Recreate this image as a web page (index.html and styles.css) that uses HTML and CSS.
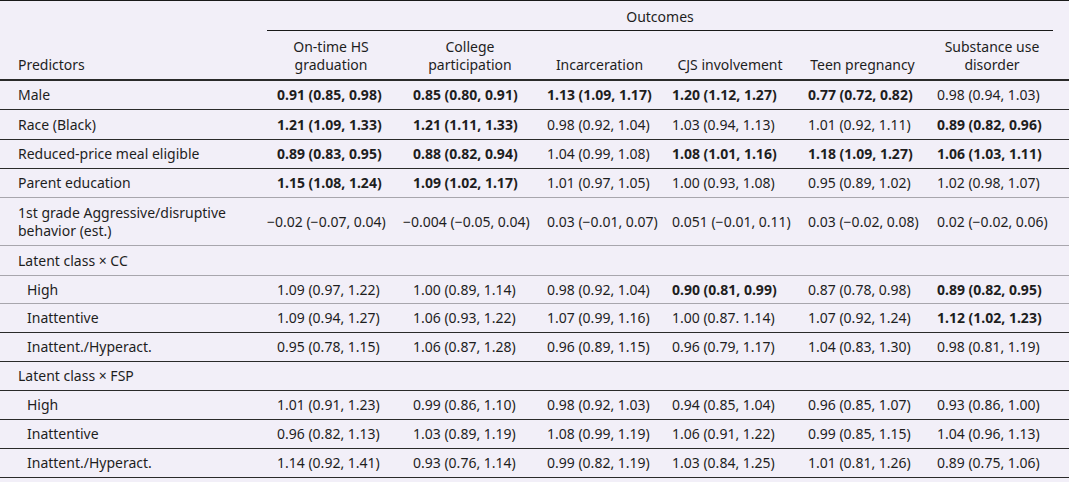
FILE: index.html
```
<!DOCTYPE html>
<html lang="en">
<head>
<meta charset="utf-8">
<title>Outcomes table</title>
<link rel="stylesheet" href="styles.css">
</head>
<body>
<table class="tbl">
  <colgroup>
    <col class="c-pred">
    <col class="c1">
    <col class="c2">
    <col class="c3">
    <col class="c4">
    <col class="c5">
    <col class="c6">
  </colgroup>
  <thead>
    <tr class="h1">
      <th class="blank"></th>
      <th class="span" colspan="6"><div class="span-line">Outcomes</div></th>
    </tr>
    <tr class="h2">
      <th class="pred-h">Predictors</th>
      <th class="first-h">On-time HS<br>graduation</th>
      <th>College<br>participation</th>
      <th>Incarceration</th>
      <th>CJS involvement</th>
      <th>Teen pregnancy</th>
      <th class="last-h">Substance use<br>disorder</th>
    </tr>
  </thead>
  <tbody>
    <tr class="dark">
      <td class="lab">Male</td>
      <td class="b">0.91 (0.85, 0.98)</td>
      <td class="b">0.85 (0.80, 0.91)</td>
      <td class="b">1.13 (1.09, 1.17)</td>
      <td class="b">1.20 (1.12, 1.27)</td>
      <td class="b">0.77 (0.72, 0.82)</td>
      <td>0.98 (0.94, 1.03)</td>
    </tr>
    <tr class="dark r30">
      <td class="lab">Race (Black)</td>
      <td class="b">1.21 (1.09, 1.33)</td>
      <td class="b">1.21 (1.11, 1.33)</td>
      <td>0.98 (0.92, 1.04)</td>
      <td>1.03 (0.94, 1.13)</td>
      <td>1.01 (0.92, 1.11)</td>
      <td class="b">0.89 (0.82, 0.96)</td>
    </tr>
    <tr class="dark">
      <td class="lab">Reduced-price meal eligible</td>
      <td class="b">0.89 (0.83, 0.95)</td>
      <td class="b">0.88 (0.82, 0.94)</td>
      <td>1.04 (0.99, 1.08)</td>
      <td class="b">1.08 (1.01, 1.16)</td>
      <td class="b">1.18 (1.09, 1.27)</td>
      <td class="b">1.06 (1.03, 1.11)</td>
    </tr>
    <tr class="light">
      <td class="lab">Parent education</td>
      <td class="b">1.15 (1.08, 1.24)</td>
      <td class="b">1.09 (1.02, 1.17)</td>
      <td>1.01 (0.97, 1.05)</td>
      <td>1.00 (0.93, 1.08)</td>
      <td>0.95 (0.89, 1.02)</td>
      <td>1.02 (0.98, 1.07)</td>
    </tr>
    <tr class="light tall">
      <td class="lab">1st grade Aggressive/disruptive<br>behavior (est.)</td>
      <td class="neg">−0.02 (−0.07, 0.04)</td>
      <td class="neg">−0.004 (−0.05, 0.04)</td>
      <td>0.03 (−0.01, 0.07)</td>
      <td>0.051 (−0.01, 0.11)</td>
      <td>0.03 (−0.02, 0.08)</td>
      <td>0.02 (−0.02, 0.06)</td>
    </tr>
    <tr class="light r30">
      <td class="lab">Latent class × CC</td>
      <td></td><td></td><td></td><td></td><td></td><td></td>
    </tr>
    <tr class="light r28">
      <td class="lab sub">High</td>
      <td>1.09 (0.97, 1.22)</td>
      <td>1.00 (0.89, 1.14)</td>
      <td>0.98 (0.92, 1.04)</td>
      <td class="b">0.90 (0.81, 0.99)</td>
      <td>0.87 (0.78, 0.98)</td>
      <td class="b">0.89 (0.82, 0.95)</td>
    </tr>
    <tr class="dark">
      <td class="lab sub">Inattentive</td>
      <td>1.09 (0.94, 1.27)</td>
      <td>1.06 (0.93, 1.22)</td>
      <td>1.07 (0.99, 1.16)</td>
      <td>1.00 (0.87. 1.14)</td>
      <td>1.07 (0.92, 1.24)</td>
      <td class="b">1.12 (1.02, 1.23)</td>
    </tr>
    <tr class="dark">
      <td class="lab sub">Inattent./Hyperact.</td>
      <td>0.95 (0.78, 1.15)</td>
      <td>1.06 (0.87, 1.28)</td>
      <td>0.96 (0.89, 1.15)</td>
      <td>0.96 (0.79, 1.17)</td>
      <td>1.04 (0.83, 1.30)</td>
      <td>0.98 (0.81, 1.19)</td>
    </tr>
    <tr class="dark">
      <td class="lab">Latent class × FSP</td>
      <td></td><td></td><td></td><td></td><td></td><td></td>
    </tr>
    <tr class="dark">
      <td class="lab sub">High</td>
      <td>1.01 (0.91, 1.23)</td>
      <td>0.99 (0.86, 1.10)</td>
      <td>0.98 (0.92, 1.03)</td>
      <td>0.94 (0.85, 1.04)</td>
      <td>0.96 (0.85, 1.07)</td>
      <td>0.93 (0.86, 1.00)</td>
    </tr>
    <tr class="dark">
      <td class="lab sub">Inattentive</td>
      <td>0.96 (0.82, 1.13)</td>
      <td>1.03 (0.89, 1.19)</td>
      <td>1.08 (0.99, 1.19)</td>
      <td>1.06 (0.91, 1.22)</td>
      <td>0.99 (0.85, 1.15)</td>
      <td>1.04 (0.96, 1.13)</td>
    </tr>
    <tr class="dark">
      <td class="lab sub">Inattent./Hyperact.</td>
      <td>1.14 (0.92, 1.41)</td>
      <td>0.93 (0.76, 1.14)</td>
      <td>0.99 (0.82, 1.19)</td>
      <td>1.03 (0.84, 1.25)</td>
      <td>1.01 (0.81, 1.26)</td>
      <td>0.89 (0.75, 1.06)</td>
    </tr>
  </tbody>
</table>
</body>
</html>
```
FILE: styles.css
```
html, body {
  margin: 0;
  padding: 0;
  background: #f2eff8;
}

.tbl {
  width: 1069px;
  border-collapse: collapse;
  table-layout: fixed;
  font-family: "Noto Sans", "Open Sans", sans-serif;
  font-size: 14px;
  line-height: 18px;
  color: #1e1e1e;
  background: #f2eff8;
  border-top: 1px solid #1a1a1a;
}

.c-pred { width: 267px; }
.c1 { width: 136px; }
.c2 { width: 134px; }
.c3 { width: 125px; }
.c4 { width: 136px; }
.c5 { width: 129px; }
.c6 { width: 142px; }

th {
  font-weight: 400;
  text-align: center;
  vertical-align: bottom;
}

.h1 th {
  height: 29px;
  padding: 0;
}

.span {
  padding: 0 16px 0 0 !important;
}

.span-line {
  border-bottom: 1px solid #1a1a1a;
  padding: 7px 0 4px;
}

.h2 th {
  padding: 7px 4px 5px;
  border-bottom: 2px solid #2a2a2a;
}

.h2 .pred-h {
  text-align: left;
  padding-left: 18px;
}

.h2 .first-h {
  padding-right: 12px;
}

.h2 .last-h {
  padding-left: 10px;
  padding-right: 22px;
}

td {
  padding: 5px 10px;
  white-space: nowrap;
  vertical-align: middle;
}

tr.r30 td { padding-top: 6px; }
tr.r28 td { padding-bottom: 4px; }
tr.tall td { padding-top: 6px; }

tr.dark td { border-bottom: 1px solid #2a2a2a; }
tr.light td { border-bottom: 1px solid #a8a6ad; }

td.lab {
  padding-left: 18px;
}

td.sub {
  padding-left: 27px;
}

td.neg {
  padding-left: 0;
  padding-right: 0;
}

td.b {
  font-weight: 700;
}
```
